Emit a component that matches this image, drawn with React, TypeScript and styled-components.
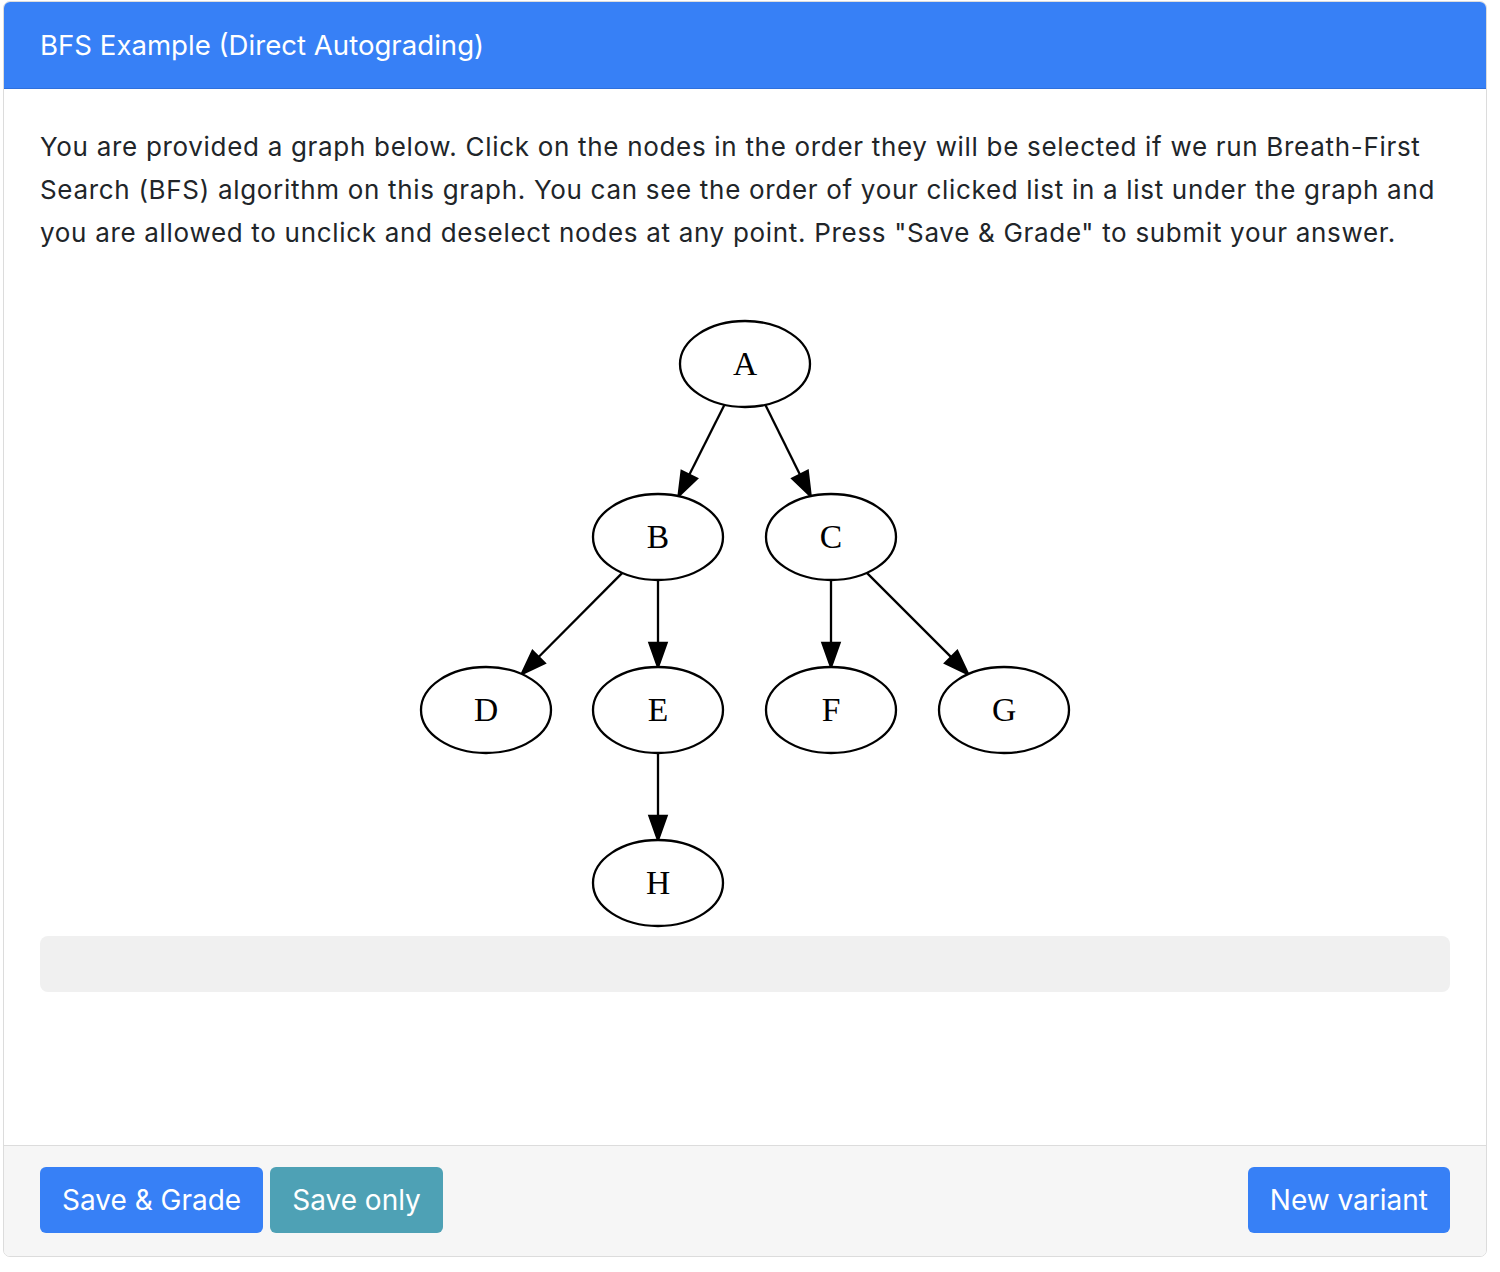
import React from "react";
import styled, { createGlobalStyle } from "styled-components";

const GlobalStyle = createGlobalStyle`
  html, body { margin: 0; padding: 0; background: #ffffff; }
  body {
    font-family: Inter, "Noto Sans", "Liberation Sans", sans-serif;
    color: #212529;
  }
`;

const Page = styled.div`
  padding: 1px 13px 16px 3px;
`;

const Card = styled.section`
  display: flex;
  flex-direction: column;
  border: 1px solid #dcdcdc;
  border-radius: 7px;
  overflow: hidden;
  background: #ffffff;
`;

const CardHeader = styled.header`
  background: #3780f6;
  color: #ffffff;
  height: 86px;
  border-bottom: 1px solid #2f70dc;
  display: flex;
  align-items: center;
  padding: 0 36px;
  font-size: 27.6px;
  font-weight: 400;
`;

const CardBody = styled.div`
  padding: 36px 36px 153px 36px;
  display: flex;
  flex-direction: column;
`;

const Prompt = styled.p`
  margin: 0 0 57px 0;
  font-size: 26px;
  line-height: 43px;
  letter-spacing: 0.69px;
`;

const GraphWrap = styled.div`
  display: flex;
  justify-content: center;
`;

const OrderList = styled.div`
  height: 56px;
  background: #f0f0f0;
  border-radius: 8px;
`;

const CardFooter = styled.footer`
  background: #f6f6f6;
  border-top: 1px solid #dcdcdc;
  padding: 21px 36px 23px 36px;
  display: flex;
  justify-content: space-between;
  align-items: center;
`;

const ButtonGroup = styled.div`
  display: flex;
  gap: 7px;
`;

const Button = styled.button<{ $variant: "primary" | "info" }>`
  height: 66px;
  border: none;
  border-radius: 6px;
  padding: 0 22px;
  font-family: Inter, "Noto Sans", "Liberation Sans", sans-serif;
  font-size: 28px;
  color: #ffffff;
  background: ${(p) => (p.$variant === "primary" ? "#3780f6" : "#4ea1b5")};
  cursor: pointer;
`;

type NodeDef = { id: string; x: number; y: number };

const RX = 65;
const RY = 43;

const nodes: NodeDef[] = [
  { id: "A", x: 333, y: 53 },
  { id: "B", x: 246, y: 226 },
  { id: "C", x: 419, y: 226 },
  { id: "D", x: 74, y: 399 },
  { id: "E", x: 246, y: 399 },
  { id: "F", x: 419, y: 399 },
  { id: "G", x: 592, y: 399 },
  { id: "H", x: 246, y: 572 },
];

const edges: [string, string][] = [
  ["A", "B"],
  ["A", "C"],
  ["B", "D"],
  ["B", "E"],
  ["C", "F"],
  ["C", "G"],
  ["E", "H"],
];

const byId = (id: string) => nodes.find((n) => n.id === id)!;

function edgeGeometry(from: NodeDef, to: NodeDef) {
  const dx = to.x - from.x;
  const dy = to.y - from.y;
  const t = 1 / Math.sqrt((dx / RX) ** 2 + (dy / RY) ** 2);
  const sx = from.x + dx * t;
  const sy = from.y + dy * t;
  const ex = to.x - dx * t;
  const ey = to.y - dy * t;
  const len = Math.hypot(ex - sx, ey - sy);
  const ux = (ex - sx) / len;
  const uy = (ey - sy) / len;
  const head = 24;
  const half = 8.6;
  const bx = ex - ux * head;
  const by = ey - uy * head;
  const px = -uy;
  const py = ux;
  return {
    line: `M${sx},${sy} L${bx},${by}`,
    arrow: `${ex},${ey} ${bx + px * half},${by + py * half} ${bx - px * half},${by - py * half}`,
  };
}

const Graph = () => (
  <svg width={667} height={625} viewBox="0 0 667 625">
    <rect x={0} y={0} width={667} height={625} fill="#ffffff" />
    {edges.map(([a, b]) => {
      const g = edgeGeometry(byId(a), byId(b));
      return (
        <g key={a + b}>
          <path d={g.line} stroke="#000" strokeWidth={2.3} fill="none" />
          <polygon points={g.arrow} fill="#000" stroke="#000" strokeWidth={2.3} strokeLinejoin="miter" />
        </g>
      );
    })}
    {nodes.map((n) => (
      <g key={n.id}>
        <ellipse cx={n.x} cy={n.y} rx={RX} ry={RY} fill="#fff" stroke="#000" strokeWidth={2.3} />
        <text
          x={n.x}
          y={n.y + 11}
          textAnchor="middle"
          fontFamily='"Liberation Serif", "Times New Roman", serif'
          fontSize={33.6}
          fill="#000"
        >
          {n.id}
        </text>
      </g>
    ))}
  </svg>
);

export default function App() {
  return (
    <>
      <GlobalStyle />
      <Page>
        <Card>
          <CardHeader>BFS Example (Direct Autograding)</CardHeader>
          <CardBody>
            <Prompt>
              You are provided a graph below. Click on the nodes in the order they will be selected if we run
              Breath-First Search (BFS) algorithm on this graph. You can see the order of your clicked list in a
              list under the graph and you are allowed to unclick and deselect nodes at any point. Press "Save
              &amp; Grade" to submit your answer.
            </Prompt>
            <GraphWrap>
              <Graph />
            </GraphWrap>
            <OrderList />
          </CardBody>
          <CardFooter>
            <ButtonGroup>
              <Button $variant="primary">Save &amp; Grade</Button>
              <Button $variant="info">Save only</Button>
            </ButtonGroup>
            <Button $variant="primary">New variant</Button>
          </CardFooter>
        </Card>
      </Page>
    </>
  );
}
